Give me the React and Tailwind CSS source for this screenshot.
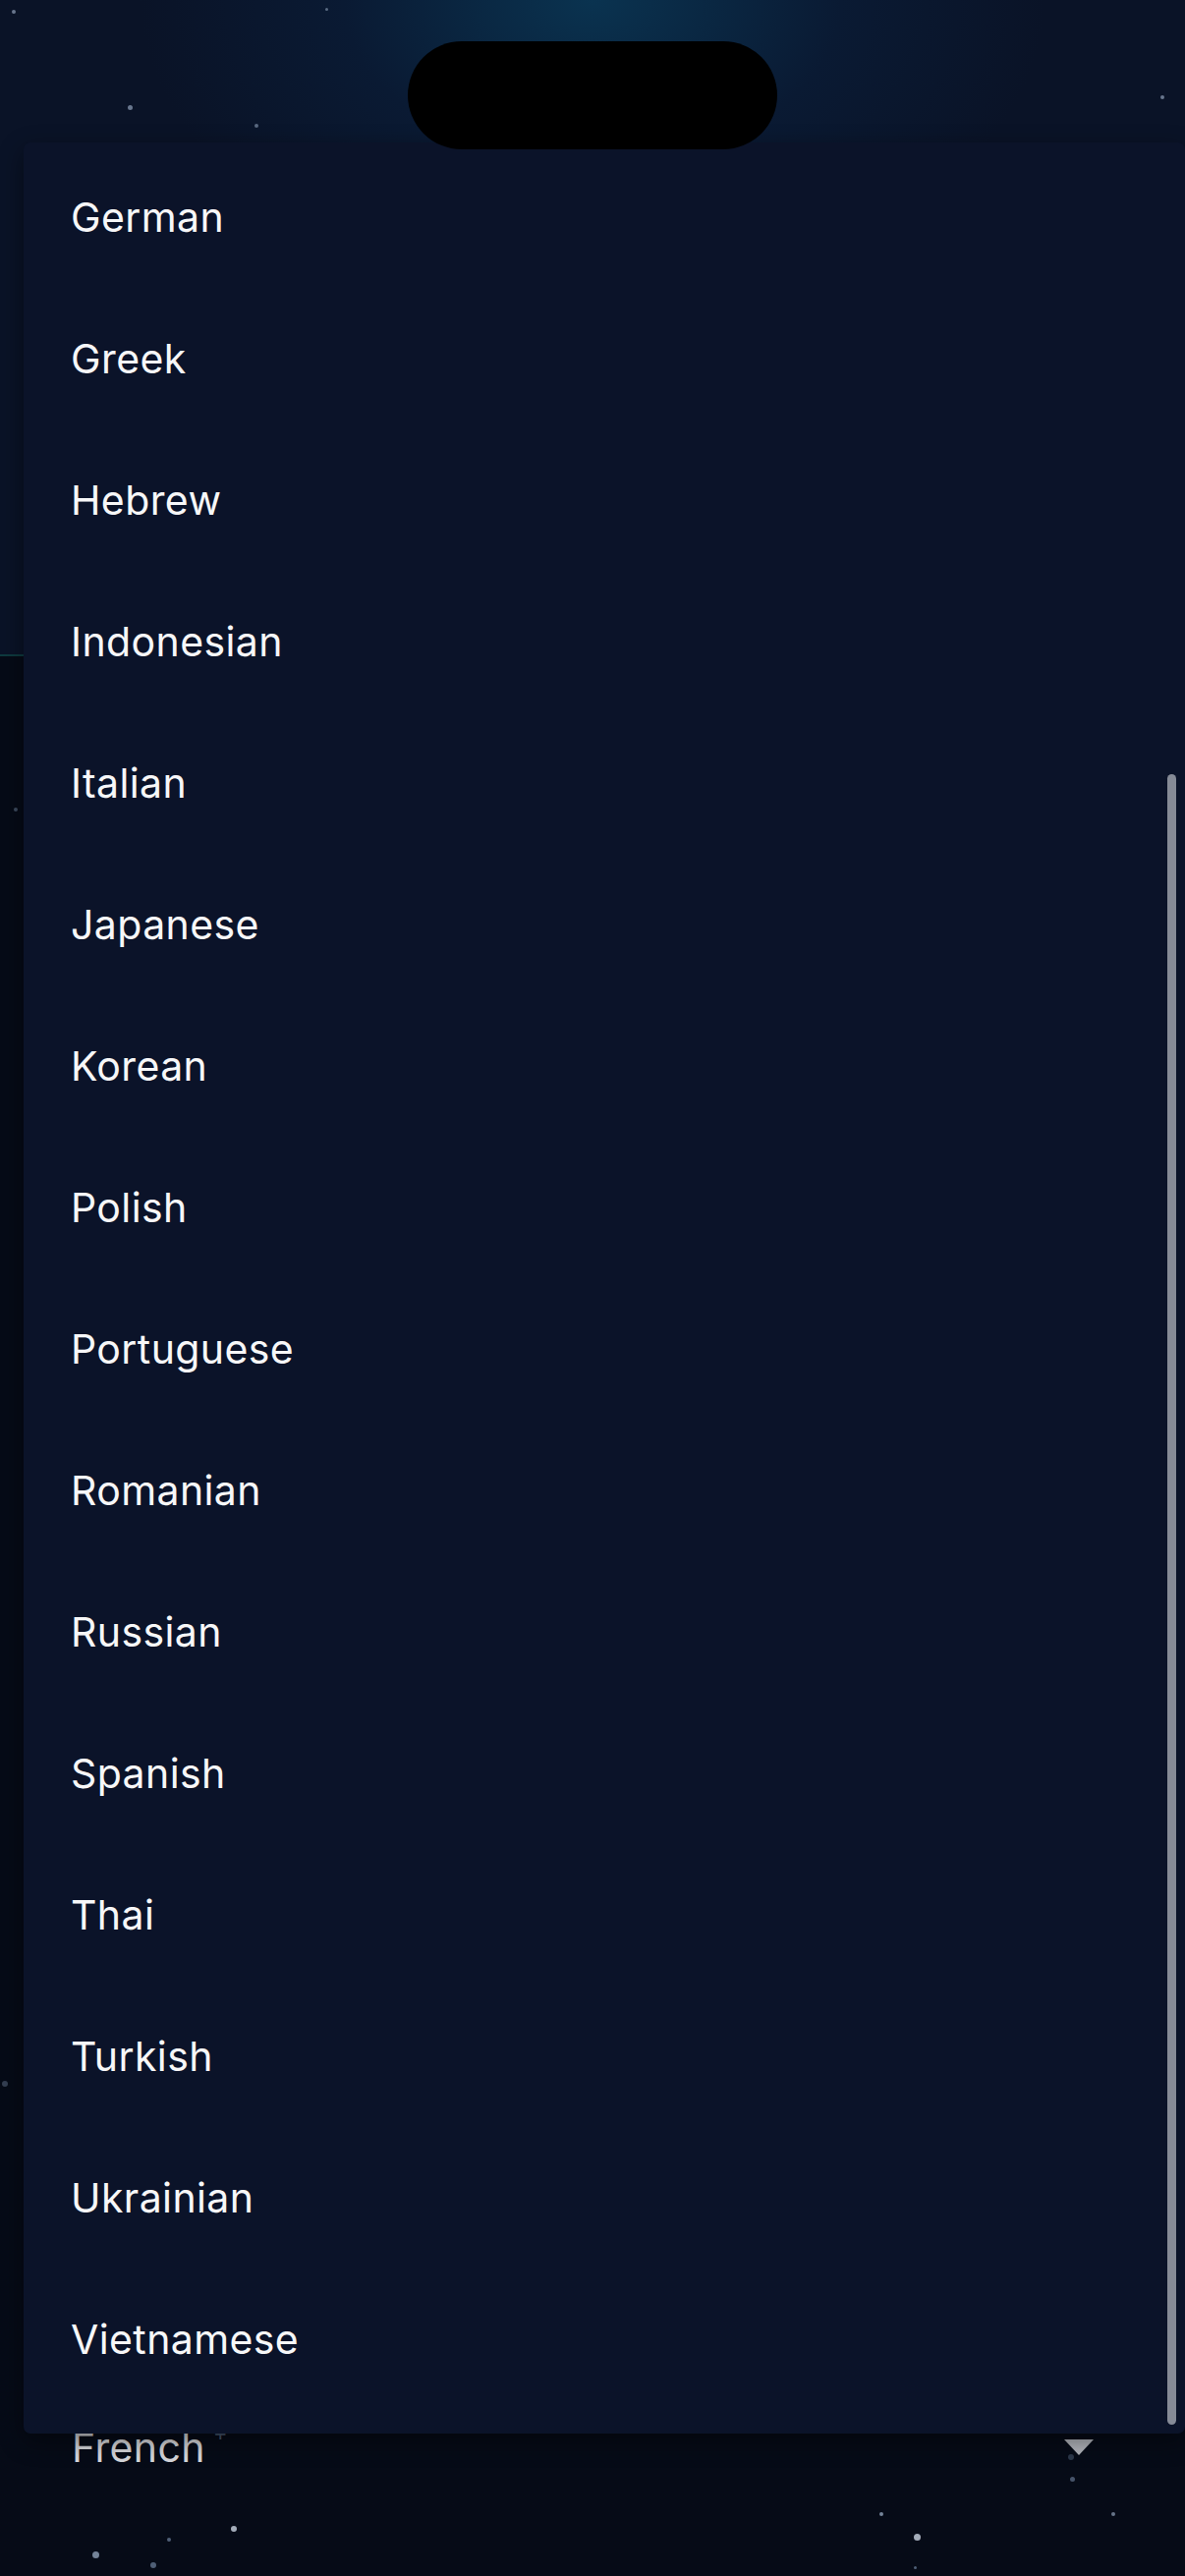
import React from "react";

const languages = [
  "German",
  "Greek",
  "Hebrew",
  "Indonesian",
  "Italian",
  "Japanese",
  "Korean",
  "Polish",
  "Portuguese",
  "Romanian",
  "Russian",
  "Spanish",
  "Thai",
  "Turkish",
  "Ukrainian",
  "Vietnamese",
];

// decorative stars behind the menu
const stars = [
  { x: 12, y: 10, s: 4, c: "bg-slate-400/70" },
  { x: 331, y: 8, s: 3, c: "bg-slate-400/60" },
  { x: 130, y: 107, s: 5, c: "bg-slate-400/70" },
  { x: 259, y: 126, s: 4, c: "bg-slate-400/60" },
  { x: 1181, y: 97, s: 4, c: "bg-slate-400/70" },
  { x: 14, y: 822, s: 4, c: "bg-slate-500/60" },
  { x: 2, y: 2118, s: 6, c: "bg-slate-500/50" },
  { x: 94, y: 2597, s: 7, c: "bg-slate-400/80" },
  { x: 153, y: 2608, s: 6, c: "bg-slate-500/80" },
  { x: 170, y: 2583, s: 4, c: "bg-slate-500/80" },
  { x: 235, y: 2571, s: 6, c: "bg-slate-300/80" },
  { x: 895, y: 2557, s: 4, c: "bg-slate-400/80" },
  { x: 930, y: 2579, s: 7, c: "bg-slate-300/80" },
  { x: 930, y: 2612, s: 3, c: "bg-slate-500/80" },
  { x: 1089, y: 2521, s: 5, c: "bg-slate-500/70" },
  { x: 1131, y: 2557, s: 4, c: "bg-slate-400/70" },
  { x: 1087, y: 2498, s: 6, c: "bg-slate-600/60" },
];

function App() {
  return (
    <div className="relative w-[1206px] h-[2622px] overflow-hidden bg-[#060b17] font-['Inter','Noto_Sans',sans-serif]">
      {/* page header behind the menu */}
      <div className="h-[668px] border-b-2 border-[#0e3a3f] bg-[#0a1327] bg-[radial-gradient(ellipse_460px_300px_at_50%_0%,#0a3350_0%,#0a1a33_55%,transparent_100%)]" />

      <div className="pt-[1791px] pl-[73px] pr-[93px]">
        <div className="flex h-[64px] items-center justify-between">
          <div className="flex items-start">
            <span className="text-[41px] leading-none tracking-[0.4px] text-[#d6d7db]">French</span>
            <span className="ml-[8px] -mt-[6px] text-[22px] leading-none text-slate-600">+</span>
          </div>
          <svg width="30" height="16" viewBox="0 0 30 16">
            <path d="M0 0 L30 0 L15 16 Z" fill="#b2b5bc" />
          </svg>
        </div>
      </div>

      {stars.map((st, i) => (
        <div
          key={i}
          className={`absolute rounded-full ${st.c}`}
          style={{ left: st.x, top: st.y, width: st.s, height: st.s }}
        />
      ))}

      {/* language menu */}
      <div className="absolute left-[24px] top-[145px] w-[1182px] h-[2332px] overflow-hidden rounded-[7px] bg-[#0b1329] shadow-[0_8px_24px_rgba(0,0,0,0.45)]">
        <ul className="pt-[4px] pb-[24px] pl-[48px]">
          {languages.map((lang) => (
            <li key={lang} className="flex h-[144px] items-center text-[41px] leading-none tracking-[0.4px] text-[#f7f7f8]">
              {lang}
            </li>
          ))}
        </ul>
        <div className="absolute right-[9px] top-[643px] bottom-[9px] w-[9px] rounded-full bg-[#868b97]" />
      </div>

      {/* camera island */}
      <div className="absolute left-[415px] top-[42px] w-[376px] h-[110px] rounded-full bg-black" />
    </div>
  );
}

export default App;
